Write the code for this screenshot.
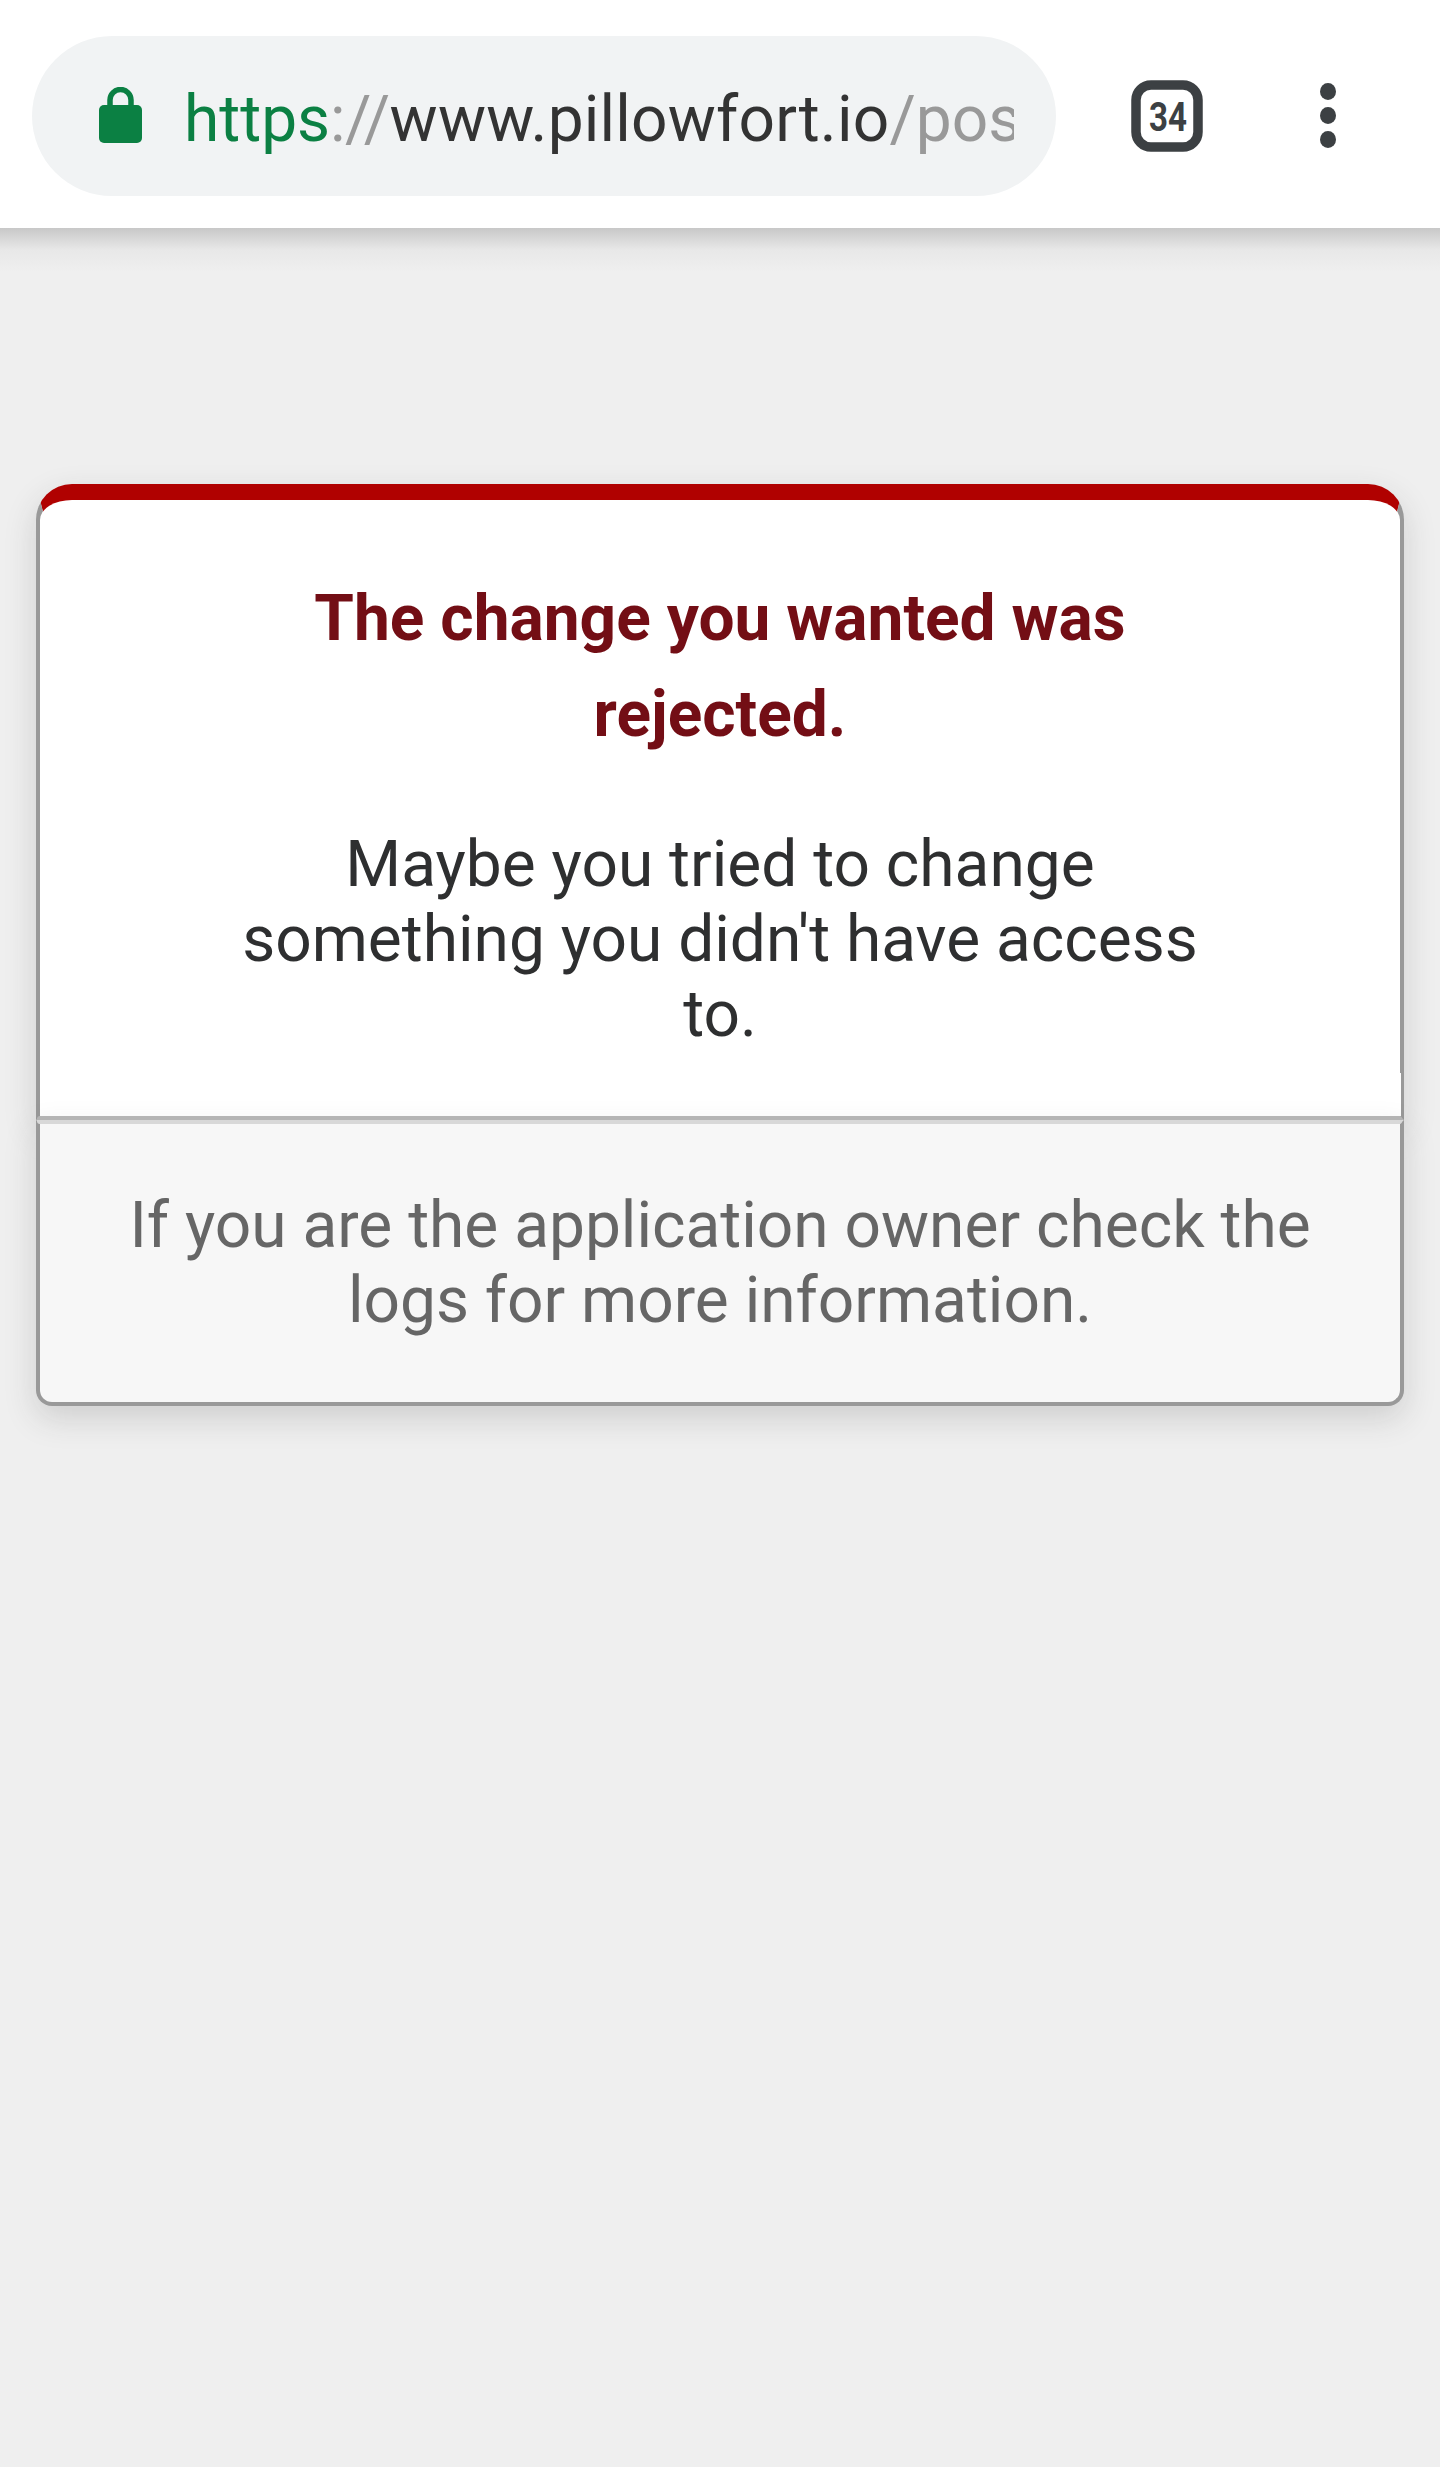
<header class="toolbar">
  <div class="omnibox">
    <svg class="lock" viewBox="0 0 43 56" aria-hidden="true">
      <path class="shackle" d="M11 20V13a10.5 10.5 0 0 1 21 0V20" />
      <rect y="18" width="43" height="38" rx="5" />
    </svg>
    <div class="url">
      <span class="scheme">https</span><span class="muted sep">://</span><span class="host">www.pillowfort.io</span><span class="muted">/posts</span>
    </div>
  </div>
  <svg class="tabs" viewBox="0 0 72 72" role="img" aria-label="34 tabs">
    <rect x="5" y="5" width="62" height="62" rx="15" />
    <text x="37" y="51" textLength="38" lengthAdjust="spacingAndGlyphs" text-anchor="middle">34</text>
  </svg>
  <div class="menu" aria-hidden="true"><i></i><i></i><i></i></div>
</header>

<main class="dialog">
  <div class="panel">
    <h1>The change you wanted was rejected.</h1>
    <p>Maybe you tried to change something you didn't have access to.</p>
  </div>
  <p class="note">If you are the application owner check the logs for more information.</p>
</main>

<style>
  :global(body) {
    background: #efefef;
    color: #2e2f30;
    font-family: Roboto, "Liberation Sans", sans-serif;
    min-height: 2467px;
  }

  .toolbar {
    align-items: center;
    background: #fff;
    box-sizing: border-box;
    display: flex;
    height: 228px;
    padding: 4px 0 0 32px;
    position: relative;
  }

  /* browser chrome drop shadow, sits over the page */
  .toolbar::after {
    background: linear-gradient(180deg, #c8c8c8, #e8e8e8 50%, #efefef);
    content: '';
    height: 44px;
    left: 0;
    position: absolute;
    right: 0;
    top: 100%;
  }

  .omnibox {
    align-items: center;
    background: #f1f3f4;
    border-radius: 80px;
    box-sizing: border-box;
    display: flex;
    gap: 42px;
    height: 160px;
    padding: 0 42px 0 67px;
    width: 1024px;
  }

  .lock {
    flex: none;
    fill: #0b8043;
    height: 56px;
    margin-top: -2px;
    width: 43px;
  }

  .shackle {
    fill: none;
    stroke: #0b8043;
    stroke-width: 5.5;
  }

  .url {
    color: #999;
    flex: 1;
    font-size: 64px;
    line-height: 75px;
    min-width: 0;
    overflow: hidden;
    padding-top: 6px;
    white-space: nowrap;
  }

  .scheme {
    color: #0b8043;
  }

  .sep {
    letter-spacing: -0.6px;
  }

  .host {
    color: #333;
    letter-spacing: 0.2px;
  }

  .tabs {
    flex: none;
    height: 72px;
    margin-left: 75px;
    width: 72px;
  }

  .tabs rect {
    fill: none;
    stroke: #3c4043;
    stroke-width: 9.5;
  }

  .tabs text {
    fill: #3c4043;
    font-family: Roboto, sans-serif;
    font-size: 41px;
    font-weight: 700;
  }

  .menu {
    display: grid;
    gap: 7px;
    margin-left: 117px;
    margin-top: -1px;
  }

  .menu i {
    background: #3c4043;
    border-radius: 50%;
    display: block;
    height: 17px;
    width: 16px;
  }

  .dialog {
    font-size: 64px;
    margin: 256px auto 0;
    text-align: center;
    width: 95%;
  }

  .panel {
    background: #fff;
    border: 4px solid #ccc;
    border-bottom-color: #bbb;
    border-left-color: #999;
    border-radius: 36px 36px 0 0;
    border-right-color: #999;
    border-top: 16px solid #b00100;
    box-shadow: 0 12px 32px rgba(50, 50, 50, 0.17);
    padding: 28px 12% 0;
    position: relative;
  }

  /* 1px white sliver eating into the right border just above the divider */
  .panel::after {
    background: #fff;
    bottom: 0;
    content: '';
    height: 43px;
    position: absolute;
    right: -1px;
    width: 1px;
  }

  h1 {
    color: #730e15;
    font-size: 100%;
    line-height: 1.5em;
  }

  p {
    margin: 64px 0;
  }

  .note {
    background: #f7f7f7;
    border: 4px solid #ccc;
    border-bottom-color: #999;
    border-bottom-left-radius: 16px;
    border-bottom-right-radius: 16px;
    border-left-color: #999;
    border-right-color: #999;
    border-top-color: #dadada;
    box-shadow: 0 12px 32px rgba(50, 50, 50, 0.17);
    color: #666;
    margin: 0 0 64px;
    padding: 64px;
    position: relative;
  }

  /* the divider runs over the side borders */
  .note::before {
    background: linear-gradient(180deg, #b4b4b4 50%, #d8d8d8 50%);
    border-radius: 3px;
    content: '';
    height: 8px;
    left: -3px;
    position: absolute;
    right: -2px;
    top: -8px;
  }
</style>
